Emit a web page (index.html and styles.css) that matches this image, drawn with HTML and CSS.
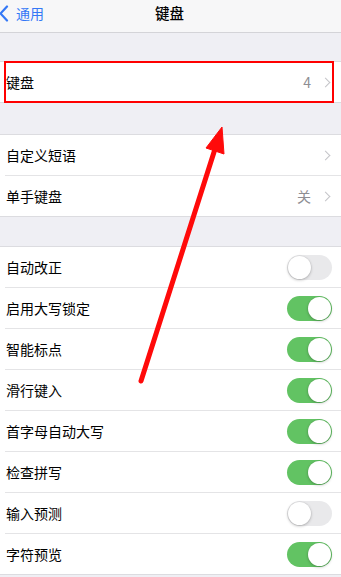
FILE: index.html
```html
<!DOCTYPE html>
<html lang="zh">
<head>
<meta charset="utf-8">
<link rel="stylesheet" href="styles.css">
</head>
<body>
<div class="page">
  <header class="nav">
    <div class="back">
      <svg class="back-icon" width="10" height="17" viewBox="0 0 10 17"><path d="M8 1.5 L1.5 8.5 L8 15.5" fill="none" stroke="#3478f6" stroke-width="2.2" stroke-linecap="round" stroke-linejoin="round"/></svg>
      <span class="back-text">通用</span>
    </div>
    <div class="title">键盘</div>
  </header>

  <section class="group g1">
    <div class="row"><span class="label">键盘</span><span class="detail">4</span><span class="chev"></span></div>
  </section>

  <section class="group g2">
    <div class="row"><span class="label">自定义短语</span><span class="chev"></span></div>
    <div class="row"><span class="label">单手键盘</span><span class="detail">关</span><span class="chev"></span></div>
  </section>

  <section class="group g3">
    <div class="row"><span class="label">自动改正</span><span class="toggle"></span></div>
    <div class="row"><span class="label">启用大写锁定</span><span class="toggle on"></span></div>
    <div class="row"><span class="label">智能标点</span><span class="toggle on"></span></div>
    <div class="row"><span class="label">滑行键入</span><span class="toggle on"></span></div>
    <div class="row"><span class="label">首字母自动大写</span><span class="toggle on"></span></div>
    <div class="row"><span class="label">检查拼写</span><span class="toggle on"></span></div>
    <div class="row"><span class="label">输入预测</span><span class="toggle"></span></div>
    <div class="row"><span class="label">字符预览</span><span class="toggle on"></span></div>
  </section>

  <div class="highlight"></div>
  <svg class="arrow" width="341" height="577" viewBox="0 0 341 577">
    <line x1="141" y1="381" x2="215" y2="149" stroke="#ff0a0a" stroke-width="5" stroke-linecap="round"/>
    <polygon points="222,127 224,154 206,148" fill="#ff0a0a" stroke="#ff0a0a" stroke-width="1" stroke-linejoin="round"/>
  </svg>
</div>
</body>
</html>
```

FILE: styles.css
```css
* { box-sizing: border-box; }
html, body { margin: 0; padding: 0; }
body {
  background: #efeff4;
  font-family: "Noto Sans CJK SC", "Noto Sans", sans-serif;
  width: 341px;
  height: 577px;
  overflow: hidden;
}
.page {
  position: relative;
  width: 341px;
  height: 577px;
  overflow: hidden;
}
.nav {
  height: 33px;
  background: #f7f7f8;
  border-bottom: 1px solid #d4d4d8;
  display: flex;
  align-items: center;
  position: relative;
}
.back {
  display: flex;
  align-items: center;
  gap: 7px;
  margin-left: -1px;
  margin-top: -6px;
}
.back-icon { display: block; }
.back-text {
  color: #3478f6;
  font-size: 14px;
  line-height: 20px;
}
.title {
  position: absolute;
  left: 0;
  right: 0;
  top: 3px;
  text-align: center;
  font-size: 14.5px;
  font-weight: 500;
  line-height: 20px;
  color: #000;
  margin-left: -2px;
}
.group {
  background: #fff;
  border-top: 1px solid #dcdce0;
  border-bottom: 1px solid #dcdce0;
}
.g1 { margin-top: 28px; }
.g2 { margin-top: 31px; }
.g3 { margin-top: 29px; }
.row {
  height: 41px;
  display: flex;
  align-items: center;
  padding: 0 9px 0 6px;
  border-top: 1px solid #e4e4e6;
  margin-left: 5px;
  padding-left: 1px;
}
.row:first-child {
  border-top: none;
  height: 40px;
}
.label {
  flex: 1;
  font-size: 14px;
  color: #000;
  line-height: 20px;
}
.detail {
  font-size: 14px;
  color: #8e8e93;
  margin-right: 11px;
  line-height: 20px;
}
.chev {
  width: 7px;
  height: 7px;
  border-top: 1.5px solid #c4c4c8;
  border-right: 1.5px solid #c4c4c8;
  transform: rotate(45deg);
  margin-right: 3px;
}
.toggle {
  width: 45px;
  height: 25px;
  border-radius: 13px;
  background: #e9e9eb;
  position: relative;
  margin-top: 1px;
}
.toggle::after {
  content: "";
  position: absolute;
  top: 1px;
  left: 1px;
  width: 23px;
  height: 23px;
  border-radius: 50%;
  background: #fff;
  box-shadow: 0 1px 3px rgba(0,0,0,0.25), 0 0 0 0.5px rgba(0,0,0,0.06);
}
.toggle.on { background: #62c363; }
.toggle.on::after { left: 21px; }
.highlight {
  position: absolute;
  left: 4px;
  top: 61px;
  width: 330px;
  height: 42px;
  border: 2px solid #ff0000;
}
.arrow {
  position: absolute;
  left: 0;
  top: 0;
  pointer-events: none;
}
```
